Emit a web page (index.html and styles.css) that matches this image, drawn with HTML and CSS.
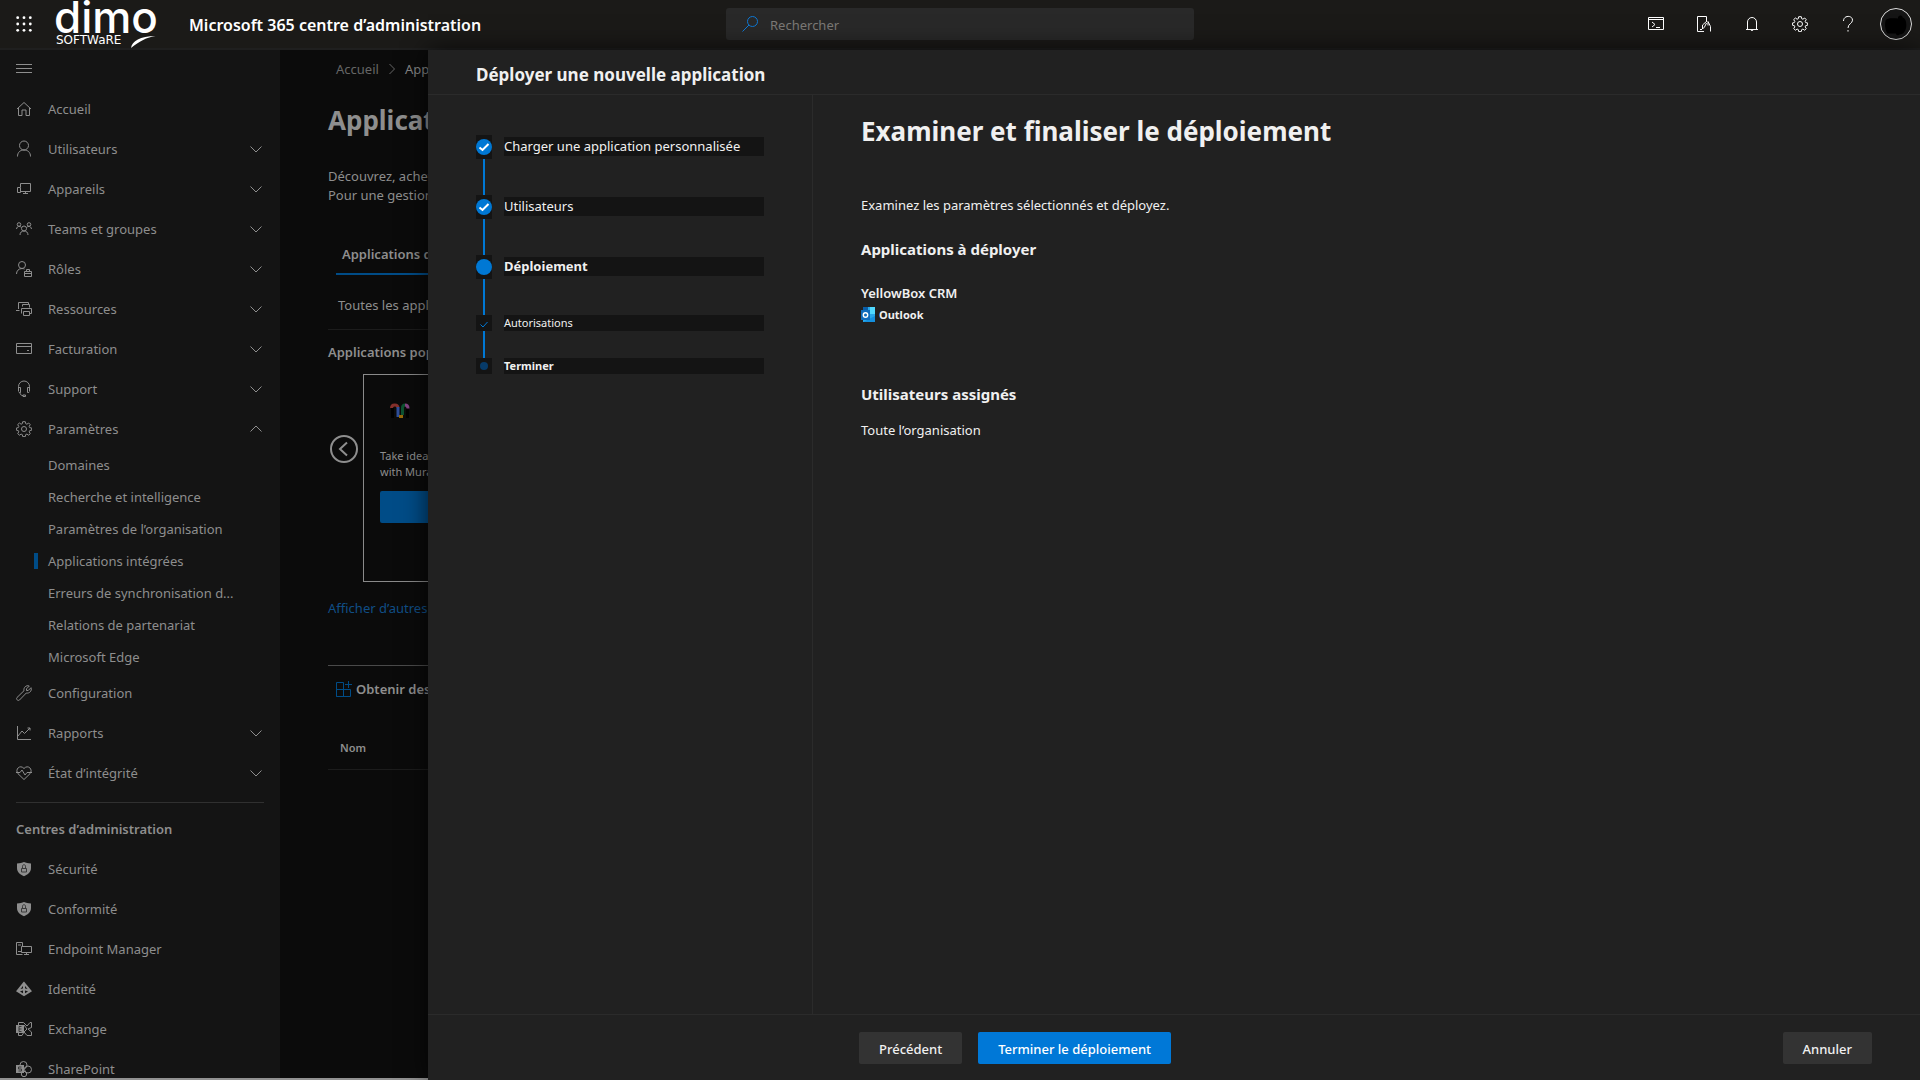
FILE: index.html
```html
<!DOCTYPE html>
<html lang="fr">
<head>
<meta charset="utf-8">
<meta name="viewport" content="width=device-width, initial-scale=1">
<title>Microsoft 365 centre d’administration</title>
<link rel="stylesheet" href="styles.css">
</head>
<body>
<svg class="sprite" aria-hidden="true">
  <symbol id="chevron" viewBox="0 0 12 12"><path d="M.5 3.500 6 9l5.500-5.500"/></symbol>
  <symbol id="gear" viewBox="0 0 16 16"><circle cx="8" cy="8" r="2.500"/><path d="M6.700.7h2.600l.4 2 1.200.5 1.800-1.200 1.500 1.600-1 1.800.5 1.200 2 .4v2.200l-2 .4-.5 1.300 1.100 1.700-1.600 1.600-1.800-1.100-1.200.5-.4 2H6.700l-.4-2-1.200-.5-1.700 1.100-1.700-1.600 1.100-1.700-.5-1.300-1.900-.4V7l1.900-.4.5-1.200-1.100-1.800 1.700-1.600 1.700 1.200 1.200-.5z"/></symbol>
  <symbol id="shield" viewBox="0 0 16 16"><path fill="currentColor" stroke="none" d="M8 1c1.800.9 4.200 1.400 7 1.400V7c0 4-3 6.600-7 8.200C4 13.600 1 11 1 7V2.400C3.800 2.400 6.200 1.900 8 1z"/><path stroke="#3a3a3a" d="M5.500 7.500h5v3.500h-5zM6.500 7.500V5.200c0-2 3-2 3 0v2.300"/></symbol>
</svg>

<header class="topbar">
  <div class="topbar-start">
    <button class="icon-btn" aria-label="Lanceur d’applications">
      <svg class="ico" viewBox="0 0 16 16"><g fill="currentColor" stroke="none"><circle cx="1.700" cy="1.700" r="1.400"/><circle cx="8" cy="1.700" r="1.400"/><circle cx="14.300" cy="1.700" r="1.400"/><circle cx="1.700" cy="8" r="1.400"/><circle cx="8" cy="8" r="1.400"/><circle cx="14.300" cy="8" r="1.400"/><circle cx="1.700" cy="14.300" r="1.400"/><circle cx="8" cy="14.300" r="1.400"/><circle cx="14.300" cy="14.300" r="1.400"/></g></svg>
    </button>
    <svg class="logo" viewBox="0 0 104 48" role="img" aria-label="dimo software">
      <text class="logo-name" x="-2" y="33">dimo</text>
      <text class="logo-sub" x="0" y="44">SOFTWaRE</text>
      <path d="M75 48C76 41 84 36 99.500 36 89 38 84 41 75 48z"/>
    </svg>
    <a class="brand" href="#">Microsoft 365 centre d’administration</a>
  </div>
  <label class="search">
    <svg class="ico" viewBox="0 0 16 16"><circle cx="10.500" cy="5.500" r="5"/><path d="M7 9 .5 15.500"/></svg>
    <input type="search" placeholder="Rechercher" aria-label="Rechercher">
  </label>
  <div class="tools">
    <button class="icon-btn" aria-label="Cloud Shell"><svg class="ico" viewBox="0 0 16 16"><path d="M.5 1.500h15v12H.5zM.5 3.500h15M4 6l3 2.500-3 2.500M8 11.500h4"/></svg></button>
    <button class="icon-btn" aria-label="Mobile"><svg class="ico" viewBox="0 0 16 16"><path d="M8 15.500H1.500V.5h9V5M4 13.500h2M14.500 15.500v-5l-2.500-5M12 5.500v4M11 5 6.500 9v4l2-2 2-4"/></svg></button>
    <button class="icon-btn" aria-label="Notifications"><svg class="ico" viewBox="0 0 16 16"><path d="M3.500 13V6a4.500 4.500 0 0 1 9 0v7M2 13.500h12M6.500 13.500a1.600 1.600 0 0 0 3 0"/></svg></button>
    <button class="icon-btn" aria-label="Paramètres"><svg class="ico"><use href="#gear"/></svg></button>
    <button class="icon-btn" aria-label="Aide"><svg class="ico" viewBox="0 0 16 16"><path d="M3.500 5c0-6 9-6 9-.8C12.500 7.500 8 7.800 8 12M8 14v1.600"/></svg></button>
    <button class="avatar" aria-label="Compte"><svg viewBox="0 0 32 32"><path d="M5 12c2-3 8-2 13-2 0-4 5-4 5-1 3 1 4 4 4 8 0 6-3 10-7 10-1 2-4 1-4-1H7c-3-3-3-11-2-14z"/></svg></button>
  </div>
</header>

<div class="shell">
  <nav class="sidebar" aria-label="Navigation">
    <button class="menu-btn" aria-label="Réduire la navigation"><svg class="ico" viewBox="0 0 16 16"><path d="M0 3.500h16M0 7.500h16M0 11.500h16"/></svg></button>
    <a class="item" href="#"><svg class="ico" viewBox="0 0 16 16"><path d="M1 8l7-6.500L15 8M2.500 7v7.500H6V9h4v5.500h3.500V7"/></svg><span>Accueil</span></a>
    <a class="item" href="#"><svg class="ico" viewBox="0 0 16 16"><circle cx="8" cy="4.500" r="4.500"/><path d="M1.500 15.500c0-4 2.500-6.500 6.500-6.500s6.500 2.500 6.500 6.500"/></svg><span>Utilisateurs</span><svg class="chev"><use href="#chevron"/></svg></a>
    <a class="item" href="#"><svg class="ico" viewBox="0 0 16 16"><path d="M4.500 6V2.500h10v8H4.500M1.500 6.500h3v5h-3zM9.500 10.500V12M7 12.500h5"/></svg><span>Appareils</span><svg class="chev"><use href="#chevron"/></svg></a>
    <a class="item" href="#"><svg class="ico" viewBox="0 0 16 16"><circle cx="8" cy="7.500" r="2.500"/><circle cx="3" cy="3.500" r="1.800"/><circle cx="13" cy="3.500" r="1.800"/><path d="M4 14c0-2.600 1.600-4 4-4s4 1.400 4 4M.5 8c.3-1.800 1.500-2.700 2.500-2.700S5 6 5.500 6.500M15.500 8c-.3-1.800-1.500-2.700-2.500-2.700s-2 .7-2.500 1.200"/></svg><span>Teams et groupes</span><svg class="chev"><use href="#chevron"/></svg></a>
    <a class="item" href="#"><svg class="ico" viewBox="0 0 16 16"><circle cx="6" cy="4" r="3.500"/><path d="M.5 13c0-3 2-5.500 5.500-5.500 1.200 0 2 .3 2.500.6M8.500 10.500h7v5h-7zM8.500 12.500h7M10.500 10.500v-2h3v2"/></svg><span>Rôles</span><svg class="chev"><use href="#chevron"/></svg></a>
    <a class="item" href="#"><svg class="ico" viewBox="0 0 16 16"><path d="M6.500 5.500v-2h7v3M2.500 8V1.500h10v2M0 9.500h3.500M5.500 12.500v-5h10v5h-2M7.500 10.500h6v4h-6z"/></svg><span>Ressources</span><svg class="chev"><use href="#chevron"/></svg></a>
    <a class="item" href="#"><svg class="ico" viewBox="0 0 16 16"><path d="M.5 2.500h15v10H.5zM.5 5.500h15M11 9.500h2"/></svg><span>Facturation</span><svg class="chev"><use href="#chevron"/></svg></a>
    <a class="item" href="#"><svg class="ico" viewBox="0 0 16 16"><path d="M2.500 10V5.500a5.500 5.500 0 0 1 11 0V10M2.500 6.500h2v5H3.200l-.7-1M13.500 6.500h-2v5h1.300l.7-1M4 11.500c0 2 1 3 3 3M7 14h2.500v1.500H7z"/></svg><span>Support</span><svg class="chev"><use href="#chevron"/></svg></a>
    <a class="item" href="#"><svg class="ico"><use href="#gear"/></svg><span>Paramètres</span><svg class="chev up"><use href="#chevron"/></svg></a>
    <a class="subitem" href="#">Domaines</a>
    <a class="subitem" href="#">Recherche et intelligence</a>
    <a class="subitem" href="#">Paramètres de l’organisation</a>
    <a class="subitem current" href="#" aria-current="page">Applications intégrées</a>
    <a class="subitem" href="#">Erreurs de synchronisation d...</a>
    <a class="subitem" href="#">Relations de partenariat</a>
    <a class="subitem" href="#">Microsoft Edge</a>
    <a class="item" href="#"><svg class="ico" viewBox="0 0 16 16"><path d="M13.300 1 10.500 3.800v1.700h1.700L15 2.700c1.200 3-1.500 6-4.700 5.300L3.500 15c-1.500 1.400-4-1-2.500-2.500L8 5.700C7.300 2.500 10.300-.2 13.300 1z"/></svg><span>Configuration</span></a>
    <a class="item" href="#"><svg class="ico" viewBox="0 0 16 16"><path d="M1.500 1v13.500H15M2 11l4-5 2.500 2.500L14 3M11.500 3H14v2.500"/></svg><span>Rapports</span><svg class="chev"><use href="#chevron"/></svg></a>
    <a class="item" href="#"><svg class="ico" viewBox="0 0 16 16"><path d="M8 14.500 2 8.700C-1.500 4.500 4-1 8 3.500 12-1 17.500 4.500 14 8.700zM0 7.500h4L6 5l3 5 2-2.500h5"/></svg><span>État d’intégrité</span><svg class="chev"><use href="#chevron"/></svg></a>
    <h2 class="group">Centres d’administration</h2>
    <a class="item" href="#"><svg class="ico"><use href="#shield"/></svg><span>Sécurité</span></a>
    <a class="item" href="#"><svg class="ico"><use href="#shield"/></svg><span>Conformité</span></a>
    <a class="item" href="#"><svg class="ico" viewBox="0 0 16 16"><path d="M6.500 13.500h-6v-12h6V5M2 4h3M2 10.500h3M5.500 5.500h10v6h-10zM10.500 11.500v2M8 13.500h5"/></svg><span>Endpoint Manager</span></a>
    <a class="item" href="#"><svg class="ico" viewBox="0 0 16 16"><path stroke-width="2" d="M8 2 1.500 10 8 14l6.500-4zM8 3v10M2 10l6-2 6 2"/></svg><span>Identité</span></a>
    <a class="item" href="#"><svg class="ico" viewBox="0 0 16 16"><path d="M2.500 4V1.500h5L11 5l3-3.500h1.500v5L12 8l3.500 3v3.500H11L8 11l-2 3.500H2.500V12M8 4l3 4-3 3"/><path fill="currentColor" stroke="none" d="M0 4h8v8H0z"/><path stroke="#3a3a3a" d="M5.500 5.500H3v5h2.500M3 8h2.500"/></svg><span>Exchange</span></a>
    <a class="item" href="#"><svg class="ico" viewBox="0 0 16 16"><circle cx="7.500" cy="4" r="3.500"/><circle cx="12" cy="8.500" r="3.500"/><circle cx="8" cy="13" r="2.700"/><path fill="currentColor" stroke="none" d="M0 4h8v8H0z"/><path stroke="#3a3a3a" d="M5.500 6h-3v2h3v2h-3"/></svg><span>SharePoint</span></a>
  </nav>

  <main class="page">
    <nav class="crumbs" aria-label="Fil d’Ariane"><a href="#">Accueil</a><svg class="ico" viewBox="0 0 16 16"><path d="M5.500 3l5 5-5 5"/></svg><span>Applications</span></nav>
    <h1>Applications</h1>
    <p class="intro">Découvrez, achetez<br>Pour une gestion</p>
    <div class="tabs"><a class="tab" href="#">Applications disponibles</a></div>
    <a class="filter" href="#">Toutes les applications</a>
    <h3 class="section-title">Applications populaires</h3>
    <div class="carousel">
      <button class="prev" aria-label="Précédentes"><svg viewBox="0 0 28 28"><circle cx="14" cy="14" r="13"/><path d="M17 7.500 10 14l7 6.500"/></svg></button>
      <article class="card">
        <svg class="mural" viewBox="0 0 20 16"><g stroke-width="3"><path stroke="#000" d="M2.500 15V5M17.500 15V5"/><path stroke="#84302c" d="M1.500 5c0-4 6-4 6.500-.5"/><path stroke="#2f4f9a" d="M8 4v10"/><path stroke="#94690a" d="M9 13.500h4"/><path stroke="#0d5230" d="M12.500 12V5c0-2 1-3 2.500-3"/><path stroke="#824482" d="M15 2c2 0 3 1 3 3.500"/></g></svg>
        <p>Take ideas<br>with Mural</p>
        <button class="get" aria-label="Obtenir"></button>
      </article>
    </div>
    <a class="more" href="#">Afficher d’autres</a>
    <div class="commands"><button class="command"><svg class="ico" viewBox="0 0 16 16"><path d="M.5 1.500h7v14h-7zM.5 8.500h14v7H.5zM12.500 0v7M9 3.500h7"/></svg>Obtenir des applications</button></div>
    <table class="list"><thead><tr><th scope="col">Nom</th></tr></thead></table>
  </main>

  <section class="panel" role="dialog" aria-labelledby="panel-title">
    <header class="panel-head"><h2 id="panel-title">Déployer une nouvelle application</h2></header>
    <div class="panel-body">
      <ol class="steps">
        <li class="step"><span class="mark"><svg viewBox="0 0 16 16"><circle cx="8" cy="8" r="8"/><path d="M3.500 8.500 6.500 11l6-6"/></svg></span><span class="label">Charger une application personnalisée</span></li>
        <li class="step"><span class="mark"><svg viewBox="0 0 16 16"><circle cx="8" cy="8" r="8"/><path d="M3.500 8.500 6.500 11l6-6"/></svg></span><span class="label">Utilisateurs</span></li>
        <li class="step active" aria-current="step"><span class="mark"><svg viewBox="0 0 16 16"><circle cx="8" cy="8" r="8"/></svg></span><span class="label">Déploiement</span></li>
        <li class="step sub"><span class="mark"><svg viewBox="0 0 16 16"><path d="M4.500 9.500 7 12l4.500-5"/></svg></span><span class="label">Autorisations</span></li>
        <li class="step sub active"><span class="mark"><svg viewBox="0 0 16 16"><circle cx="8" cy="8" r="4"/></svg></span><span class="label">Terminer</span></li>
      </ol>
      <div class="review">
        <h1>Examiner et finaliser le déploiement</h1>
        <p class="lead">Examinez les paramètres sélectionnés et déployez.</p>
        <h3>Applications à déployer</h3>
        <p class="app">YellowBox CRM</p>
        <p class="host"><svg viewBox="0 0 14 16"><path fill="#28a8ea" d="M2 0h12v15H2z"/><path fill="#0a5ea8" d="M2 0h5v3H2z"/><path fill="#50d9ff" d="M9 0h5v7H9z"/><path fill="#1490df" d="M2 15l12-6v6z"/><path fill="#0f6cbd" d="M0 3h9v10H0z"/><circle cx="4.500" cy="8" r="2.200" fill="none" stroke="#fff" stroke-width="1.400"/></svg>Outlook</p>
        <h3>Utilisateurs assignés</h3>
        <p class="scope">Toute l’organisation</p>
      </div>
    </div>
    <footer class="panel-foot">
      <button class="btn">Précédent</button>
      <button class="btn primary">Terminer le déploiement</button>
      <button class="btn cancel">Annuler</button>
    </footer>
  </section>
</div>
</body>
</html>
```
FILE: styles.css
```css
* { box-sizing: border-box; }

body {
  margin: 0;
  height: 100vh;
  display: flex;
  flex-direction: column;
  overflow: hidden;
  background: #0b0b0b;
  color: #8e8e8e;
  font: 13px/20px "Segoe UI", "Noto Sans", "Open Sans", sans-serif;
}

h1, h2, h3, p, ol { margin: 0; padding: 0; font-size: inherit; }
a { color: inherit; text-decoration: none; }
button { font: inherit; color: inherit; background: none; border: 0; padding: 0; }
svg { display: block; flex: none; fill: none; stroke: currentColor; overflow: visible; }
.sprite { width: 0; height: 0; position: absolute; }
.ico { width: 16px; height: 16px; }

/* Top bar */
.topbar {
  flex: none;
  height: 50px;
  display: grid;
  grid-template-columns: 1fr 468px 1fr;
  align-items: center;
  background: #1b1a18;
  border-bottom: 2px solid #1f1f1f;
  color: #fff;
}
.topbar-start { display: flex; align-items: center; }
.icon-btn { width: 48px; height: 48px; display: grid; place-items: center; }
.logo { width: 104px; height: 48px; margin-left: 8px; fill: #fff; stroke: none; }
.logo-name { font: 500 44px Inter, sans-serif; }
.logo-sub { font: 12px "DejaVu Sans", sans-serif; }
.brand { padding: 2px 0 0 29px; font-size: 16px; font-weight: 600; white-space: nowrap; }
.search {
  height: 32px;
  display: flex;
  align-items: center;
  gap: 12px;
  padding: 0 16px;
  border-radius: 3px;
  background: #292929;
  color: #0f78d4;
}
.search input {
  flex: 1;
  min-width: 0;
  border: 0;
  padding: 2px 0 0;
  background: none;
  color: #ddd;
  font: inherit;
  outline: 0;
}
.search input::placeholder { color: #7c7976; opacity: 1; }
.tools { display: flex; justify-content: flex-end; align-items: center; padding-right: 8px; }
.avatar {
  width: 32px;
  height: 32px;
  margin-left: 8px;
  border: 1px solid #ddd;
  border-radius: 50%;
  background: #151515;
}
.avatar svg { fill: #000; stroke: none; }

.shell { flex: 1; min-height: 0; display: flex; position: relative; border-bottom: 2px solid #929292; }

/* Sidebar */
.sidebar { flex: none; width: 280px; overflow: hidden; background: #141414; }
.menu-btn { height: 39px; padding: 0 0 2px 16px; display: flex; align-items: center; }
.item {
  height: 40px;
  display: flex;
  align-items: center;
  gap: 16px;
  padding: 0 18px 0 16px;
  white-space: nowrap;
}
.item span { flex: 1; }
.chev { width: 12px; height: 12px; }
.chev.up { transform: rotate(180deg); }
.subitem { height: 32px; display: flex; align-items: center; padding-left: 48px; white-space: nowrap; }
.subitem.current { padding-left: 34px; }
.subitem.current::before { content: ""; width: 4px; height: 16px; margin-right: 10px; background: #004c87; }
.group {
  margin: 9px 16px 0;
  padding: 16px 0 10px;
  border-top: 1px solid #303030;
  font-weight: 600;
}

/* Page under the panel */
.page { flex: 1; min-width: 0; padding: 9px 48px 0; overflow: hidden; white-space: nowrap; }
.crumbs { display: flex; align-items: center; gap: 5px; padding-left: 8px; color: #666; }
.crumbs span { color: #858585; }
.page h1 { margin-top: 23px; font-size: 26px; line-height: 36px; font-weight: 700; }
.intro { margin-top: 29px; line-height: 19px; }
.tabs { display: flex; margin: 32px 0 0 8px; }
.tab { flex: 1; height: 38px; padding: 7px 6px 0; border-bottom: 2px solid #004c87; font-weight: 600; }
.filter { display: block; height: 55px; padding: 20px 10px 0; border-bottom: 1px solid #1c1c1c; }
.section-title { margin-top: 12px; font-weight: 600; }
.carousel { display: flex; align-items: flex-start; margin-top: 12px; }
.prev { flex: none; width: 35px; margin-top: 61px; padding-left: 2px; }
.prev svg { width: 28px; height: 28px; stroke-width: 2; }
.card { width: 240px; height: 208px; padding: 28px 16px; border: 1px solid #8a8a8a; font-size: 11px; line-height: 16px; }
.mural { width: 20px; height: 16px; margin-left: 10px; }
.card p { margin-top: 29px; }
.get { display: block; width: 100%; height: 32px; margin-top: 11px; border-radius: 2px; background: #004c87; }
.more { display: block; margin-top: 16px; color: #104e86; }
.commands { margin-top: 47px; padding: 13px 8px 0; border-top: 1px solid #4a4a4a; }
.command { display: flex; align-items: center; gap: 4px; font-weight: 600; }
.command .ico { color: #004c87; }
.list { width: 100%; margin-top: 28px; border-collapse: collapse; }
.list th { height: 42px; padding: 0 12px; border-bottom: 1px solid #1c1c1c; text-align: left; font-size: 11px; font-weight: 600; }

/* Deployment panel, drawn over the page */
.panel {
  position: absolute;
  inset: 0 0 -2px 428px;
  display: flex;
  flex-direction: column;
  background: #212121;
  color: #f0f0f0;
  box-shadow: 0 0 24px rgba(0, 0, 0, .7);
}
.panel-head { flex: none; height: 45px; padding: 13px 48px 0; border-bottom: 1px solid #2b2b2b; }
.panel-head h2 { font-size: 17px; line-height: 24px; font-weight: 700; }
.panel-body { flex: 1; min-height: 0; display: flex; }
.steps { flex: none; width: 385px; padding: 40px 48px 0; border-right: 1px solid #2b2b2b; list-style: none; }
.step {
  display: flex;
  align-items: flex-start;
  gap: 12px;
  height: 60px;
  background: linear-gradient(#0078d4, #0078d4) 7px 0 / 2px 100% no-repeat;
}
.mark { flex: none; width: 16px; height: 24px; display: grid; place-items: center; background: #141414; }
.mark svg { width: 16px; height: 16px; stroke: #fff; stroke-width: 2; }
.mark circle { fill: #0078d4; stroke: none; }
.label { flex: 0 1 260px; margin-top: 2px; line-height: 19px; background: #141414; white-space: nowrap; }
.step.active .label { font-weight: 700; }
.step.sub { height: 43px; font-size: 11px; }
.sub .mark { height: 16px; }
.sub .mark svg { stroke: #0078d4; stroke-width: 1; }
.sub .mark circle { fill: #073b69; }
.sub .label { margin-top: 0; line-height: 16px; }
.step:last-child { background: none; }

.review { flex: 1; min-width: 0; padding: 16px 48px 0; }
.review h1 { font-size: 26px; line-height: 40px; font-weight: 700; }
.lead { margin-top: 44px; }
.review h3 { margin-top: 24px; font-size: 15px; line-height: 20px; font-weight: 700; }
.app { margin-top: 24px; font-weight: 600; }
.host { display: flex; align-items: center; gap: 4px; margin-top: 2px; font-size: 11px; font-weight: 700; }
.host svg { width: 14px; height: 16px; stroke: none; }
.review .host + h3 { margin-top: 59px; }
.scope { margin-top: 16px; }

.panel-foot {
  flex: none;
  display: flex;
  gap: 16px;
  height: 66px;
  padding: 17px 48px 16px 431px;
  border-top: 1px solid #2b2b2b;
}
.btn { padding: 1px 20px 0; border-radius: 2px; background: #333; font-weight: 500; }
.btn.primary { background: #0078d7; color: #fff; }
.btn.cancel { margin-left: auto; }
```
